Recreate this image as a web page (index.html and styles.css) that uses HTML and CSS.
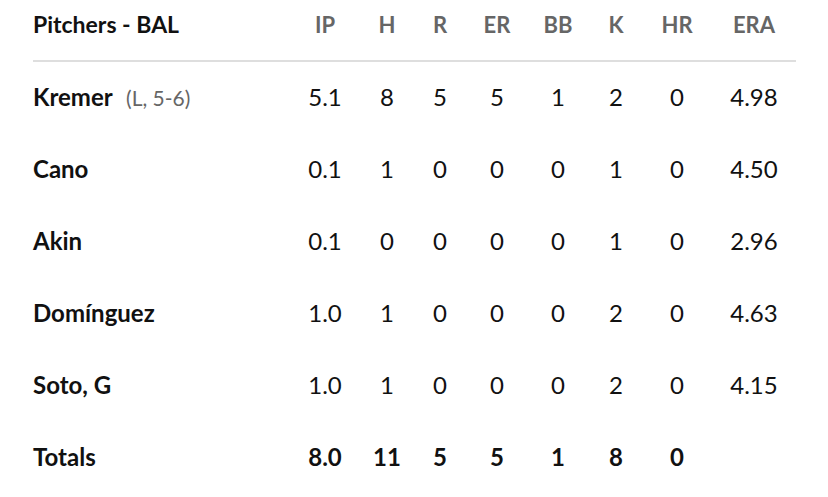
FILE: index.html
```html
<!DOCTYPE html>
<html lang="en">
<head>
    <meta charset="UTF-8">
    <meta name="viewport" content="width=device-width, initial-scale=1.0">
    <title>Pitchers - BAL</title>
    <link rel="stylesheet" href="styles.css">
</head>
<body>
    <table class="box-score">
        <colgroup>
            <col class="col-name">
            <col class="col-ip">
            <col class="col-h">
            <col class="col-r">
            <col class="col-er">
            <col class="col-bb">
            <col class="col-k">
            <col class="col-hr">
            <col class="col-era">
        </colgroup>
        <thead>
            <tr>
                <th class="title">Pitchers - BAL</th>
                <th>IP</th>
                <th>H</th>
                <th>R</th>
                <th>ER</th>
                <th>BB</th>
                <th>K</th>
                <th>HR</th>
                <th>ERA</th>
            </tr>
        </thead>
        <tbody>
            <tr>
                <td class="name">Kremer <span class="note">(L, 5-6)</span></td>
                <td>5.1</td><td>8</td><td>5</td><td>5</td><td>1</td><td>2</td><td>0</td><td>4.98</td>
            </tr>
            <tr>
                <td class="name">Cano</td>
                <td>0.1</td><td>1</td><td>0</td><td>0</td><td>0</td><td>1</td><td>0</td><td>4.50</td>
            </tr>
            <tr>
                <td class="name">Akin</td>
                <td>0.1</td><td>0</td><td>0</td><td>0</td><td>0</td><td>1</td><td>0</td><td>2.96</td>
            </tr>
            <tr>
                <td class="name">Domínguez</td>
                <td>1.0</td><td>1</td><td>0</td><td>0</td><td>0</td><td>2</td><td>0</td><td>4.63</td>
            </tr>
            <tr>
                <td class="name">Soto, G</td>
                <td>1.0</td><td>1</td><td>0</td><td>0</td><td>0</td><td>2</td><td>0</td><td>4.15</td>
            </tr>
            <tr class="totals">
                <td class="name">Totals</td>
                <td>8.0</td><td>11</td><td>5</td><td>5</td><td>1</td><td>8</td><td>0</td><td></td>
            </tr>
        </tbody>
    </table>
</body>
</html>
```

FILE: styles.css
```css
body {
    font-family: Lato, "Noto Sans", sans-serif;
    background-color: #fff;
    color: #111;
    margin: 0;
    padding: 0 32px 0 33px;
}
.box-score {
    width: 763px;
    table-layout: fixed;
    border-collapse: collapse;
}
.col-name { width: 255px; }
.col-ip { width: 74px; }
.col-h { width: 50px; }
.col-r { width: 56px; }
.col-er { width: 58px; }
.col-bb { width: 64px; }
.col-k { width: 52px; }
.col-hr { width: 70px; }
.col-era { width: 84px; }
th, td {
    padding: 0;
    text-align: center;
    white-space: nowrap;
}
thead th {
    height: 48px;
    padding-bottom: 12px;
    border-bottom: 2px solid #dedede;
    font-size: 22px;
    font-weight: 700;
    color: #666;
}
thead th.title {
    font-size: 23px;
    text-align: left;
    color: #111;
}
tbody td {
    height: 69px;
    padding-bottom: 3px;
    font-size: 24px;
    font-weight: 400;
}
td.name {
    text-align: left;
    font-weight: 700;
}
.note {
    margin-left: 8px;
    font-size: 21px;
    font-weight: 400;
    color: #666;
}
.totals td {
    font-weight: 700;
}
```
